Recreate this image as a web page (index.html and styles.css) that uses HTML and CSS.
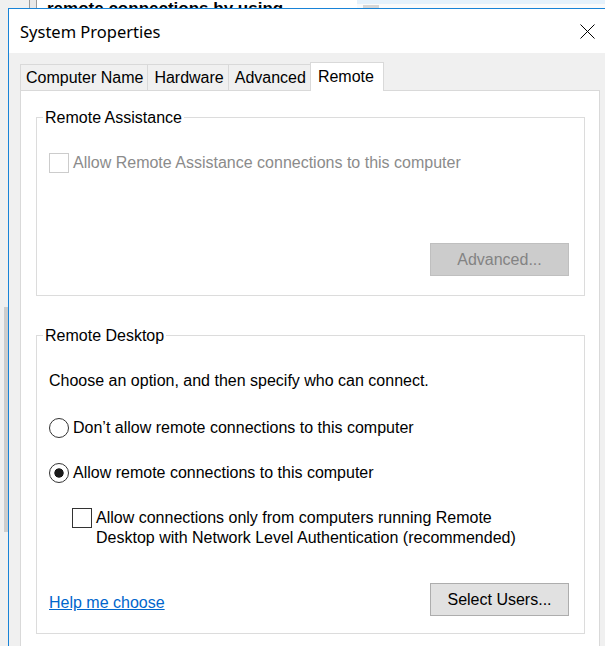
FILE: index.html
```html
<!DOCTYPE html>
<html lang="en">
<head>
  <meta charset="UTF-8">
  <title>System Properties</title>
  <link rel="stylesheet" href="styles.css">
</head>
<body>
  <!-- page behind the dialog, only its top edge shows -->
  <div class="backdrop">
    <div class="bd-gutter"></div>
    <div class="bd-rule"></div>
    <div class="bd-page"><span class="bd-text">remote connections by using</span></div>
    <div class="bd-side"><span class="bd-chip"></span></div>
  </div>

  <div class="desk">
    <div class="scrollbar"><div class="thumb"></div></div>

    <div class="window">
      <div class="titlebar">
        <span class="title">System Properties</span>
        <svg class="close" width="15" height="15" viewBox="0 0 15 15">
          <path d="M0.5 0.5L14.5 14.5M14.5 0.5L0.5 14.5" stroke="#000" stroke-width="1" fill="none"/>
        </svg>
      </div>

      <div class="dialog">
        <div class="tabs">
          <div class="tab">Computer Name</div>
          <div class="tab">Hardware</div>
          <div class="tab">Advanced</div>
          <div class="tab active">Remote</div>
        </div>

        <div class="panel">
          <!-- Remote Assistance -->
          <fieldset class="group">
            <legend>Remote Assistance</legend>
            <label class="option option-assist disabled">
              <input type="checkbox" disabled>
              <span>Allow Remote Assistance connections to this computer</span>
            </label>
            <div class="buttons buttons-assist">
              <button class="btn" disabled>Advanced...</button>
            </div>
          </fieldset>

          <!-- Remote Desktop -->
          <fieldset class="group group-desktop">
            <legend>Remote Desktop</legend>
            <p class="intro">Choose an option, and then specify who can connect.</p>
            <label class="option option-first">
              <input type="radio" name="rd">
              <span>Don’t allow remote connections to this computer</span>
            </label>
            <label class="option option-next">
              <input type="radio" name="rd" checked>
              <span>Allow remote connections to this computer</span>
            </label>
            <label class="option option-nla">
              <input type="checkbox">
              <span>Allow connections only from computers running Remote<br>Desktop with Network Level Authentication (recommended)</span>
            </label>
            <div class="footer">
              <a class="help" href="#">Help me choose</a>
              <button class="btn">Select Users...</button>
            </div>
          </fieldset>
        </div>
      </div>
    </div>
  </div>
</body>
</html>
```

FILE: styles.css
```css
* {
  box-sizing: border-box;
}
body {
  margin: 0;
  height: 646px;
  overflow: hidden;
  background: #f0f0f0;
  font-family: "Liberation Sans", Arial, sans-serif;
  font-size: 16px;
  line-height: 20px;
  color: #000;
}

/* backdrop */
.backdrop {
  display: flex;
  height: 8px;
  overflow: hidden;
  background: #fff;
}
.bd-gutter {
  width: 29px;
  background: #f0f0f0;
}
.bd-rule {
  width: 8px;
  background: #e8e8e8;
  border-left: 1px solid #9a9a9a;
  border-right: 1px solid #9a9a9a;
}
.bd-page {
  width: 320px;
  padding-left: 10px;
}
.bd-text {
  display: block;
  margin-top: -1px;
  font-size: 17px;
  font-weight: bold;
  white-space: nowrap;
}
.bd-side {
  flex: 1;
  padding: 5px 0 0 6px;
  background: linear-gradient(#e5f1fb 0 4px, #fafafa 4px);
}
.bd-chip {
  display: block;
  width: 16px;
  height: 3px;
  background: #d6d6d6;
}

/* window */
.desk {
  display: flex;
}
.scrollbar {
  width: 8px;
  padding: 299px 0 0 4px;
}
.thumb {
  width: 4px;
  height: 225px;
  background: #cdcdcd;
}
.window {
  width: 597px;
  border-top: 1px solid #1883d7;
  border-left: 1px solid #1883d7;
  background: #fff;
}
.titlebar {
  height: 44px;
  display: flex;
  align-items: center;
  justify-content: space-between;
  padding: 0 10px 0 11px;
}
.title {
  font-family: "Noto Sans", "Open Sans", sans-serif;
  font-size: 16.5px;
  padding-top: 1px;
}
.close {
  display: block;
  margin-top: 1px;
}
.dialog {
  background: #f0f0f0;
  padding: 9px 0 0 11px;
  height: 600px;
}

/* tabs */
.tabs {
  display: flex;
  align-items: flex-end;
  height: 28px;
}
.tab {
  height: 26px;
  padding: 1px 4px 0 6px;
  margin-right: -1px;
  border: 1px solid #d9d9d9;
  border-bottom: 0;
  line-height: 24px;
  background: #f0f0f0;
  white-space: nowrap;
}
.tab:first-child {
  padding-left: 5px;
}
.tab.active {
  position: relative;
  z-index: 1;
  height: 29px;
  margin-bottom: -1px;
  padding: 1px 9px 0 7px;
  line-height: 26px;
  background: #fff;
}
.panel {
  width: 580px;
  height: 580px;
  background: #fff;
  border: 1px solid #d9d9d9;
  padding: 16px 14px 0 15px;
}

/* group boxes */
.group {
  margin: 0;
  min-width: 0;
  padding: 0 15px 19px 12px;
  border: 1px solid #dcdcdc;
}
.group legend {
  padding: 1px 2px 0;
  margin-left: -6px;
  line-height: 20px;
}
.group-desktop {
  margin-top: 29px;
  padding-bottom: 17px;
}
.option {
  display: flex;
  align-items: center;
  gap: 4px;
}
.option-assist {
  margin-top: 25px;
}
.disabled {
  color: #8b8b8b;
}
.option-first {
  margin-top: 27px;
}
.option-next {
  margin-top: 25px;
}
.option-nla {
  margin-top: 25px;
  padding-left: 23px;
  align-items: flex-start;
}
.option-nla input {
  margin-top: 2px;
}
.intro {
  margin: 25px 0 0;
}

input[type="checkbox"],
input[type="radio"] {
  appearance: none;
  flex: none;
  width: 20px;
  height: 20px;
  margin: 0;
  border: 1px solid #333;
  background: #fff;
}
input[type="checkbox"]:disabled {
  border-color: #cccccc;
}
input[type="radio"] {
  border-radius: 50%;
}
input[type="radio"]:checked {
  background: radial-gradient(circle, #1a1a1a 0 4.3px, #fff 5px);
}

/* buttons */
.buttons {
  display: flex;
  justify-content: flex-end;
}
.buttons-assist {
  margin-top: 70px;
}
.btn {
  width: 139px;
  height: 33px;
  padding: 0;
  font-family: inherit;
  font-size: 16px;
  color: #000;
  background: #e1e1e1;
  border: 1px solid #adadad;
}
.btn:disabled {
  color: #838383;
  background: #cccccc;
  border-color: #bfbfbf;
}
.footer {
  display: flex;
  justify-content: space-between;
  align-items: flex-start;
  margin-top: 35px;
}
.help {
  margin-top: 10px;
  color: #0066cc;
}
```
